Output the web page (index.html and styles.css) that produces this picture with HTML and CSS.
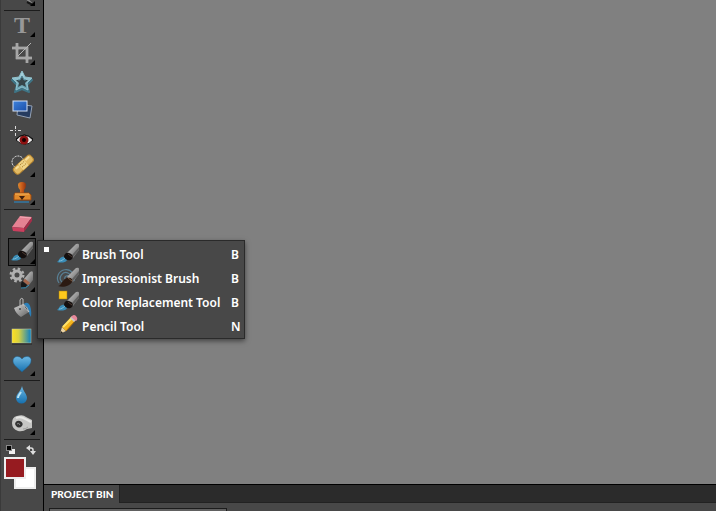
FILE: index.html
```html
<!DOCTYPE html>
<html lang="en">

<head>
    <meta charset="UTF-8">
    <meta name="viewport" content="width=device-width, initial-scale=1.0">
    <title>Photo Editor</title>
    <link rel="stylesheet" href="styles.css">
</head>

<body>
    <!-- shared icons and gradients -->
    <svg class="defs" aria-hidden="true">
        <defs>
            <linearGradient id="metal" x1="0" y1="0" x2="1" y2="1">
                <stop offset="0" stop-color="#d0d0d0" />
                <stop offset="0.5" stop-color="#9a9a9a" />
                <stop offset="1" stop-color="#606060" />
            </linearGradient>
            <linearGradient id="sky" x1="0" y1="0" x2="0" y2="1">
                <stop offset="0" stop-color="#6cb8e4" />
                <stop offset="1" stop-color="#1670ae" />
            </linearGradient>
            <linearGradient id="ice" x1="0" y1="0" x2="0" y2="1">
                <stop offset="0" stop-color="#b4dbe4" />
                <stop offset="1" stop-color="#5f9cae" />
            </linearGradient>
            <linearGradient id="blue" x1="0" y1="0" x2="1" y2="1">
                <stop offset="0" stop-color="#3f83dc" />
                <stop offset="1" stop-color="#1b4ea8" />
            </linearGradient>
            <linearGradient id="sun" x1="0" y1="0" x2="1" y2="0">
                <stop offset="0" stop-color="#ffe01f" />
                <stop offset="0.35" stop-color="#d8d13f" />
                <stop offset="1" stop-color="#0b7fc4" />
            </linearGradient>
            <linearGradient id="wood" x1="0" y1="0" x2="1" y2="0">
                <stop offset="0" stop-color="#e08a2e" />
                <stop offset="0.5" stop-color="#c55a1a" />
                <stop offset="1" stop-color="#8f3410" />
            </linearGradient>
            <symbol id="brush" viewBox="0 0 28 28">
                <path d="M3 22c2-1 2-4 5-5 3-1 6 1 5 3-1 3-7 3-10 2z" fill="#3a8cb6" />
                <path d="M5 21c2 0 4-1 6-3" stroke="#7dbdd8" fill="none" />
                <path d="M13 13L22 4q3-1 3 1v5l-6 8z" fill="url(#metal)" />
                <path d="M19 17l6-7V7l-7 8z" fill="#606060" />
                <path d="M10 17c0-3 2-5 5-4 3 1 5 3 3 6-2 2-6 2-8-2z" fill="#140f0e" />
                <path d="M14 14l4 3" stroke="#4c3a32" />
            </symbol>
        </defs>
    </svg>

    <div class="toolbar">
        <div class="group cut">
            <button class="tool more" aria-label="Lasso">
                <svg viewBox="0 0 28 28"><path d="M16 16l8 8" stroke="#888" stroke-width="2" /><path d="M19 22l6 3" stroke="#151515" stroke-width="2" /></svg>
            </button>
        </div>
        <div class="group">
            <button class="tool more type">T</button>
            <button class="tool more" aria-label="Crop">
                <svg viewBox="0 0 28 28">
                    <path d="M9 4v15h15M4 9h15v15" fill="none" stroke="#353535" stroke-width="4" />
                    <path d="M9 4v15h15M4 9h15v15" fill="none" stroke="#a6a6a6" stroke-width="3" />
                    <path d="M10 17L23 4" stroke="#b5b5b5" />
                </svg>
            </button>
            <button class="tool" aria-label="Cookie cutter">
                <svg viewBox="0 0 28 28">
                    <path d="M14 6l3 6 7 1-5 5 2 7-7-3-7 3 2-7-5-5 7-1z" fill="#3f7485" stroke="#3f7485" stroke-width="2" stroke-linejoin="round" />
                    <path d="M14 4l3 6 7 1-5 5 1 7-6-3-6 3 1-7-5-5 7-1z" fill="url(#ice)" stroke="#8fc0cc" stroke-width="1" stroke-linejoin="round" />
                    <path d="M14 9l2 4 4 0-3 3 1 4-4-2-4 2 1-4-3-3 4 0z" fill="#36454a" />
                    <path d="M10 13l2 0 2-4 2 4 2 0" fill="none" stroke="#4f8494" />
                </svg>
            </button>
            <button class="tool" aria-label="Recompose">
                <svg viewBox="0 0 28 28">
                    <path d="M10 9l14 2-2 12-13-3z" fill="#263c60" stroke="#93a1b5" />
                    <rect x="5" y="6" width="14" height="10" fill="url(#blue)" stroke="#d5e2f5" />
                </svg>
            </button>
            <button class="tool" aria-label="Red eye removal">
                <svg viewBox="0 0 28 28">
                    <path d="M7.500 3v3M7.500 10v3M2 7.500h3M10 7.500h3M7 7.500h1" stroke="#ddd" />
                    <path d="M8 17q8-10 17 0-8 9-17 0z" fill="#eee" stroke="#111" />
                    <circle cx="16" cy="17" r="4.500" fill="#8c1111" />
                    <circle cx="16" cy="17" r="2" fill="#170000" />
                    <path d="M8 16q8-8 17 0" fill="none" stroke="#111" stroke-width="1" />
                </svg>
            </button>
            <button class="tool more" aria-label="Healing brush">
                <svg viewBox="0 0 28 28">
                    <circle cx="10" cy="11" r="6" fill="none" stroke="#eee" stroke-dasharray="2 1" />
                    <g transform="rotate(-42 15 14)">
                        <rect x="4" y="10" width="23" height="8" rx="3" fill="#e2ba63" stroke="#b98832" />
                        <rect x="12" y="10" width="7" height="8" fill="#f0d488" />
                        <path d="M7 12h4M20 12h5" stroke="#f6dd9c" stroke-width="2" />
                        <path d="M13 12h5M13 15h5" stroke="#aa7d2b" stroke-dasharray="1 1" />
                    </g>
                </svg>
            </button>
            <button class="tool more" aria-label="Clone stamp">
                <svg viewBox="0 0 28 28">
                    <path d="M6 23h15" stroke="#2b8fd0" stroke-width="1" />
                    <path d="M10 6q0-3 4-3t4 3q0 3-2 5v4h-4v-4q-2-2-2-5z" fill="url(#wood)" />
                    <path d="M7 14h14l2 2v5H6v-5z" fill="#e08a2c" stroke="#9c4b10" />
                    <path d="M7 15h14" stroke="#f4b35b" />
                    <path d="M11 17h6l-3 4z" fill="#42200d" />
                </svg>
            </button>
        </div>
        <div class="group">
            <button class="tool more" aria-label="Eraser">
                <svg viewBox="0 0 28 28">
                    <path d="M12 6l12 1-8 11-12-1z" fill="#e58293" />
                    <path d="M4 17l12 1v4L5 21z" fill="#cb3f5e" />
                    <path d="M16 18l8-11v4l-8 11z" fill="#a52c49" />
                    <path d="M12 7l11 1" stroke="#f0a9b4" />
                </svg>
            </button>
            <div class="flyout">
                <button class="tool more active" aria-label="Brush">
                    <svg><use href="#brush" /></svg>
                </button>
                <div class="menu">
                    <button class="item">
                        <span class="mark on"></span>
                        <svg viewBox="0 2 28 24"><use href="#brush" width="28" height="28" /></svg>
                        <span class="name">Brush Tool</span>
                        <span class="key">B</span>
                    </button>
                    <button class="item">
                        <span class="mark"></span>
                        <svg viewBox="0 2 28 24">
                            <path d="M5 19a8.500 8.500 0 1 1 15-2M8 18a5.500 5.500 0 1 1 9-2M11 15a2.500 2.500 0 1 1 4 1" fill="none" stroke="#587f94" stroke-width="1.200" />
                            <path d="M13 13L22 4q3-1 3 1v5l-6 8z" fill="url(#metal)" />
                            <path d="M19 17l6-7V7l-7 8z" fill="#606060" />
                            <path d="M4 22c3 0 4-5 7-7 4-3 9 0 7 3-2 4-9 6-14 4z" fill="#2b1a12" />
                            <path d="M14 14l4 3" stroke="#75543a" />
                        </svg>
                        <span class="name">Impressionist Brush</span>
                        <span class="key">B</span>
                    </button>
                    <button class="item">
                        <span class="mark"></span>
                        <svg viewBox="0 2 28 24">
                            <use href="#brush" width="28" height="28" />
                            <rect x="5" y="3" width="8" height="8" fill="#ffca1d" stroke="#a97b08" stroke-width="0.5" />
                        </svg>
                        <span class="name">Color Replacement Tool</span>
                        <span class="key">B</span>
                    </button>
                    <button class="item">
                        <span class="mark"></span>
                        <svg viewBox="0 2 28 24">
                            <path d="M6 22l2-7 4 4z" fill="#ecd3a2" />
                            <path d="M6 22l1-3 2 2z" fill="#222" />
                            <path d="M8 15L17 5l4 4-9 10z" fill="#f4b51d" />
                            <path d="M9 15l9-9" stroke="#ffe26b" stroke-width="2" />
                            <path d="M12 19l9-10" stroke="#b46f0c" />
                            <path d="M16 6l2-2 4 4-2 2z" fill="#c9c9c9" />
                            <path d="M18 4q2-2 4 0t1 4l-1 1-5-4z" fill="#e7889a" />
                        </svg>
                        <span class="name">Pencil Tool</span>
                        <span class="key">N</span>
                    </button>
                </div>
            </div>
            <button class="tool more" aria-label="Smart brush">
                <svg viewBox="0 0 28 28">
                    <circle cx="9" cy="9" r="6" fill="none" stroke="#b0b0b0" stroke-width="3" stroke-dasharray="2.4 2.3" />
                    <circle cx="9" cy="9" r="4" fill="none" stroke="#b0b0b0" stroke-width="3" />
                    <path d="M16 13l6-7q3-2 3 1v7l-4 5z" fill="url(#metal)" />
                    <path d="M16 14l5 4" stroke="#a5664c" stroke-width="3" />
                    <path d="M14 15l5 4q-2 4-6 3-1-4 1-7z" fill="#181818" />
                    <path d="M13 22q5 1 8-3" fill="none" stroke="#3992bb" stroke-width="1" />
                </svg>
            </button>
            <button class="tool" aria-label="Paint bucket">
                <svg viewBox="0 0 28 28">
                    <path d="M15 11q3-4 6-1 3 4 2 13-2-3-3-7z" fill="#2c80ba" />
                    <path d="M6 14l9-4 6 8-8 5q-5-3-7-9z" fill="url(#metal)" />
                    <path d="M15 10q4 2 6 8-4-2-6-8z" fill="#3a4a55" stroke="#bbb" />
                    <path d="M12 15V6q1-3 3-1v7" fill="none" stroke="#bbb" />
                    <circle cx="12" cy="15" r="1" fill="#444" />
                </svg>
            </button>
            <button class="tool" aria-label="Gradient">
                <svg viewBox="0 0 28 28"><rect x="4" y="7" width="19" height="14" fill="url(#sun)" stroke="#c9d4ae" stroke-width="0.5" /><path d="M4 22h20" stroke="#222" /></svg>
            </button>
            <button class="tool more" aria-label="Custom shape">
                <svg viewBox="0 0 28 28"><path d="M14 22C10 18 5 15 5 11c0-5 6-6 9-2 3-4 10-3 9 2 0 4-5 7-9 11z" fill="url(#sky)" stroke="#1c618f" stroke-width="0.5" /></svg>
            </button>
        </div>
        <div class="group">
            <button class="tool more" aria-label="Blur">
                <svg viewBox="0 0 28 28">
                    <path d="M14 5c1 5 5 8 5 12a5 5 0 0 1-11 0c0-4 5-7 6-12z" fill="url(#sky)" />
                    <path d="M10 17c0-3 2-4 3-6" stroke="#b9e3f5" stroke-width="2" fill="none" />
                </svg>
            </button>
            <button class="tool more" aria-label="Sponge">
                <svg viewBox="0 0 28 28">
                    <path d="M4 14q0-6 5-7 6-2 9 1l6 3v8l-5 1q-4 3-9 2-6-2-6-8z" fill="#c6c6c4" />
                    <path d="M8 9q5-2 9 1l6 3" fill="none" stroke="#e6e6e4" stroke-width="2" />
                    <path d="M7 15q1-4 5-3 4 2 2 5-3 3-6 0z" fill="#333" />
                    <path d="M9 15q2-2 3 1" stroke="#8a8a8a" fill="none" />
                    <path d="M15 20q3 0 5-2" stroke="#a0a09e" fill="none" />
                </svg>
            </button>
        </div>
        <div class="color-actions">
            <button aria-label="Default colors">
                <svg viewBox="0 0 10 10"><path d="M3 4h6v5H3z" fill="#eee" /><path d="M0 0h6v6H0z" fill="#888" /><path d="M1 1h4v4H1z" fill="#000" /></svg>
            </button>
            <button aria-label="Swap colors">
                <svg viewBox="0 0 10 10"><path d="M2 3h3q2 0 2 2v2" fill="none" stroke="#ddd" stroke-width="1.5" /><path d="M0 3l4-3v6zM4 6h6L7 10z" fill="#ddd" /></svg>
            </button>
        </div>
        <div class="swatches">
            <button class="front" aria-label="Foreground color"></button>
            <button class="back" aria-label="Background color"></button>
        </div>
    </div>

    <div class="main">
        <div class="canvas"></div>
        <div class="bin">
            <div class="tabs">
                <button class="tab">PROJECT BIN</button>
            </div>
            <div class="panel">
                <div class="field"></div>
            </div>
        </div>
    </div>
</body>

</html>
```
FILE: styles.css
```css
* {
    margin: 0;
    padding: 0;
    box-sizing: border-box;
}

body {
    display: flex;
    height: 100vh;
    overflow: hidden;
    background-color: #808080;
    font-family: "Noto Sans", "Open Sans", sans-serif;
    color: #fff;
}

button {
    border: none;
    background: none;
    color: inherit;
    font-family: inherit;
}

svg {
    display: block;
}

.defs {
    position: absolute;
    width: 0;
    height: 0;
}

/* toolbar */
.toolbar {
    display: flex;
    flex-direction: column;
    flex: none;
    width: 44px;
    padding: 0 3px;
    background-color: #484848;
    border-left: 1px solid #3a3a3a;
    border-right: 1px solid #000;
}

.group {
    display: flex;
    flex-direction: column;
    flex: none;
    padding: 0 0 2px 4px;
    border-bottom: 1px solid #1c1c1c;
}

/* the bar is scrolled, only the end of this group shows */
.cut {
    height: 11px;
    justify-content: flex-end;
    overflow: hidden;
}

.tool {
    position: relative;
    flex: none;
    width: 28px;
    height: 28px;
}

.tool svg {
    width: 28px;
    height: 28px;
}

.more::after {
    content: "";
    position: absolute;
    right: 1px;
    bottom: 2px;
    border-left: 5px solid transparent;
    border-bottom: 5px solid #000;
}

.type {
    font: bold 24px/28px "Liberation Serif", serif;
    color: #989898;
}

.active {
    background-color: #3a3a3a;
    box-shadow: inset 0 0 0 1px #0a0a0a;
}

/* flyout menu */
.flyout {
    display: flex;
    position: relative;
}

.menu {
    position: absolute;
    z-index: 2;
    left: 29px;
    top: 2px;
    width: 208px;
    padding-top: 1px;
    background-color: #484848;
    border: 1px solid #2a2a2a;
    box-shadow: 0 2px 5px rgba(0, 0, 0, 0.5);
}

.item {
    display: flex;
    align-items: center;
    width: 100%;
    height: 24px;
    padding: 0 4px 0 6px;
    font-size: 12px;
    font-weight: 600;
    line-height: 22px;
    text-align: left;
}

.item svg {
    width: 28px;
    height: 24px;
    margin-left: 5px;
}

.mark {
    align-self: flex-start;
    width: 5px;
    height: 5px;
    margin-top: 5px;
}

.on {
    background-color: #fff;
}

.name,
.key {
    padding-top: 2px;
}

.name {
    flex: 1;
    white-space: nowrap;
}

.key {
    width: 9px;
}

/* colors */
.color-actions {
    display: flex;
    justify-content: space-between;
    flex: none;
    height: 17px;
    padding: 3px 4px 0 2px;
}

.color-actions svg {
    width: 10px;
    height: 10px;
}

.swatches {
    display: grid;
    flex: none;
    width: 32px;
    height: 32px;
}

.swatches button {
    grid-area: 1 / 1;
    width: 22px;
    height: 22px;
    border: 2px solid #eee;
}

.swatches .front {
    z-index: 1;
    background-color: #961b20;
}

.swatches .back {
    justify-self: end;
    align-self: end;
    background-color: #fff;
}

/* document area */
.main {
    display: flex;
    flex-direction: column;
    flex: 1;
    min-width: 0;
}

.canvas {
    flex: 1;
    background-color: #808080;
}

.bin {
    height: 27px;
    overflow: hidden;
    border-top: 1px solid #000;
    background-color: #484848;
}

.tabs {
    display: flex;
    height: 18px;
    background-color: #2b2b2b;
    border-bottom: 1px solid #222;
}

.tab {
    height: 18px;
    padding: 0 5px 0 7px;
    background-color: #484848;
    border-right: 1px solid #222;
    font-family: Lato, "Open Sans", sans-serif;
    font-size: 10px;
    font-weight: 900;
    line-height: 18px;
}

.panel {
    padding: 5px;
}

.field {
    width: 178px;
    height: 20px;
    border: 1px solid #1c1c1c;
    background-color: #606060;
}
```
